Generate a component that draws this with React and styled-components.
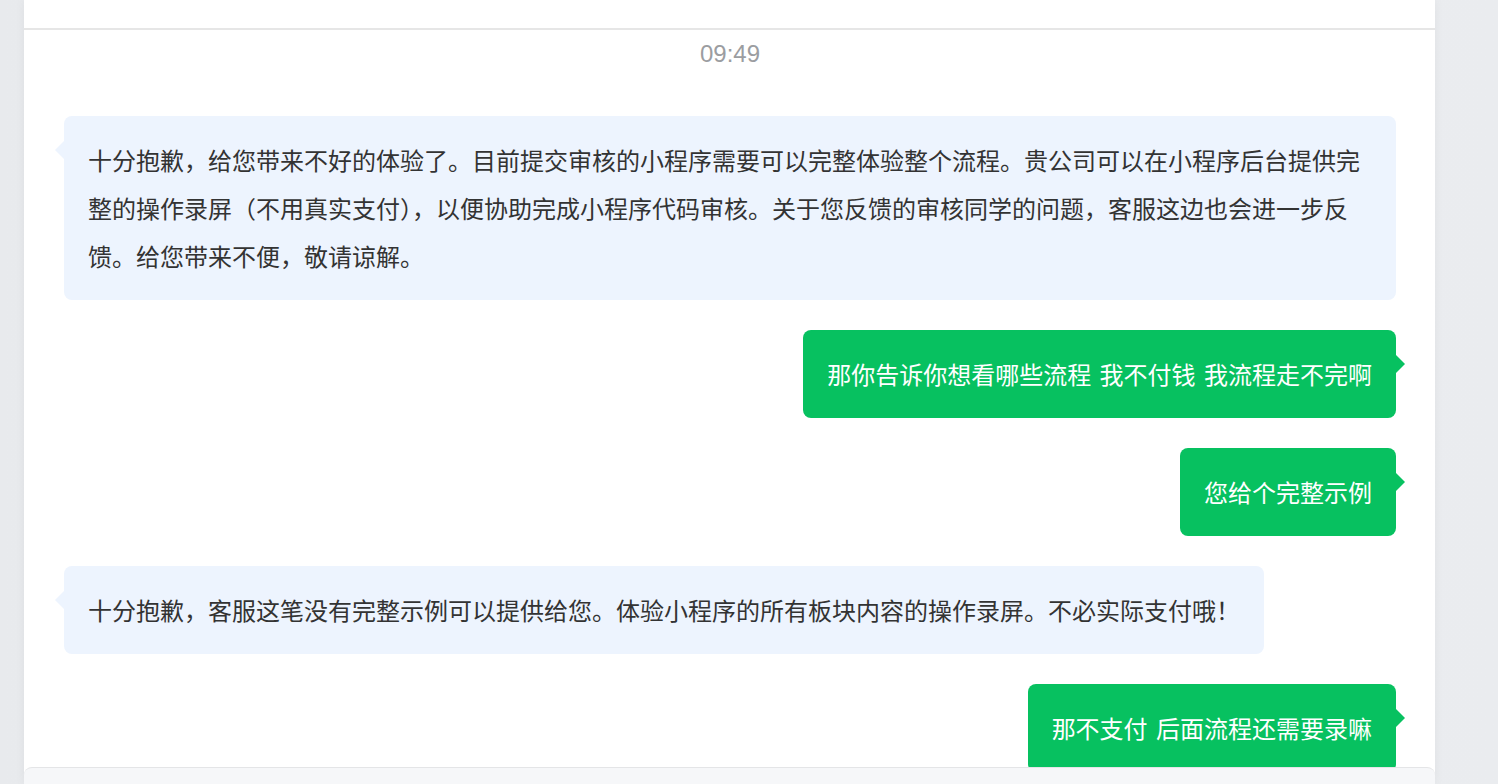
import React from 'react';
import styled, { createGlobalStyle } from 'styled-components';

const GlobalStyle = createGlobalStyle`
  html, body {
    margin: 0;
    padding: 0;
    height: 100%;
    overflow: hidden;
  }
  body {
    font-family: "Noto Sans CJK SC", "Noto Sans", sans-serif;
    -webkit-font-smoothing: antialiased;
  }
`;

const messages = [
  { type: 'time', text: '09:49' },
  {
    type: 'in',
    text: '十分抱歉，给您带来不好的体验了。目前提交审核的小程序需要可以完整体验整个流程。贵公司可以在小程序后台提供完整的操作录屏（不用真实支付），以便协助完成小程序代码审核。关于您反馈的审核同学的问题，客服这边也会进一步反馈。给您带来不便，敬请谅解。',
  },
  { type: 'out', text: '那你告诉你想看哪些流程 我不付钱 我流程走不完啊' },
  { type: 'out', text: '您给个完整示例' },
  {
    type: 'in',
    text: '十分抱歉，客服这笔没有完整示例可以提供给您。体验小程序的所有板块内容的操作录屏。不必实际支付哦！',
  },
  { type: 'out', text: '那不支付 后面流程还需要录嘛' },
];

const App = () => {
  return (
    <>
      <GlobalStyle />
      <Page>
        <Panel>
          <Header />
          <MessageList>
            {messages.map((m, i) =>
              m.type === 'time' ? (
                <TimeStamp key={i}>{m.text}</TimeStamp>
              ) : (
                <Row key={i} $out={m.type === 'out'}>
                  <Bubble $out={m.type === 'out'}>{m.text}</Bubble>
                </Row>
              )
            )}
          </MessageList>
          <Composer />
        </Panel>
      </Page>
    </>
  );
};

const Page = styled.div`
  display: flex;
  height: 100vh;
  overflow: hidden;
  padding: 0 63px 0 24px;
  box-sizing: border-box;
  background: linear-gradient(90deg, #e8eaed 0%, #eceef1 50%, #eaecef 100%);
`;

const Panel = styled.div`
  flex: 1;
  display: flex;
  flex-direction: column;
  background: #ffffff;
  box-shadow: 0 0 10px rgba(0, 0, 0, 0.05);
  min-width: 0;
  min-height: 0;
`;

const Header = styled.div`
  height: 28px;
  flex-shrink: 0;
  border-bottom: 2px solid #e6e6e6;
`;

const MessageList = styled.div`
  height: 737px;
  flex-shrink: 0;
  overflow: hidden;
  display: flex;
  flex-direction: column;
  gap: 30px;
  padding: 0 39px 0 40px;
  box-sizing: border-box;
`;

const TimeStamp = styled.div`
  text-align: center;
  font-family: "Liberation Sans", "Noto Sans", sans-serif;
  font-size: 24px;
  line-height: 48px;
  color: #9b9da1;
  margin-bottom: 8px;
`;

const Row = styled.div`
  display: flex;
  justify-content: ${p => (p.$out ? 'flex-end' : 'flex-start')};
  flex-shrink: 0;
`;

const Bubble = styled.div`
  position: relative;
  max-width: 100%;
  box-sizing: border-box;
  padding: 20px 24px;
  border-radius: 8px;
  font-size: 24px;
  line-height: 48px;
  word-spacing: 3px;
  color: ${p => (p.$out ? '#ffffff' : '#333333')};
  background: ${p => (p.$out ? '#07c160' : '#edf4fe')};
  word-break: break-all;

  &::before {
    content: '';
    position: absolute;
    top: 25px;
    ${p => (p.$out ? 'right: -9px;' : 'left: -9px;')}
    border-top: 9px solid transparent;
    border-bottom: 9px solid transparent;
    ${p =>
      p.$out
        ? 'border-left: 9px solid #07c160;'
        : 'border-right: 9px solid #edf4fe;'}
  }
`;

const Composer = styled.div`
  flex: 1;
  min-height: 0;
  background: #f6f7f9;
  border-top: 1px solid #e4e5e7;
  border-radius: 8px 8px 0 0;
`;

export default App;
